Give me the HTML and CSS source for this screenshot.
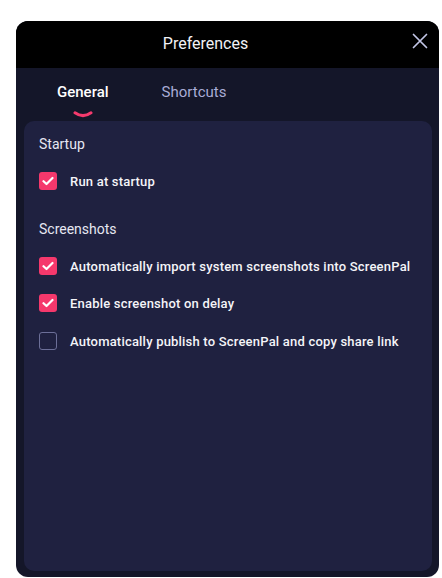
FILE: index.html
```html
<!DOCTYPE html>
<html>
<head>
<meta charset="utf-8">
<link rel="stylesheet" href="styles.css">
</head>
<body>
<div class="window">
  <div class="titlebar">
    <span class="title">Preferences</span>
    <svg class="close" width="16" height="16" viewBox="0 0 16 16"><path d="M1.5 1.5L14.5 14.5M14.5 1.5L1.5 14.5" stroke="#c3c6e6" stroke-width="1.7" stroke-linecap="round"/></svg>
  </div>
  <div class="tabs">
    <div class="tab active">General
      <svg class="chev" width="20" height="7" viewBox="0 0 20 7"><path d="M2 1.8Q10 7.5 18 1.8" fill="none" stroke="#f53a6d" stroke-width="3" stroke-linecap="round"/></svg>
    </div>
    <div class="tab">Shortcuts</div>
  </div>
  <div class="panel">
    <div class="section-title first">Startup</div>
    <div class="row r1"><span class="cb on"><svg width="12" height="10" viewBox="0 0 12 10"><path d="M1.5 5.2L4.5 8L10.5 2" fill="none" stroke="#fff" stroke-width="2.2" stroke-linecap="round" stroke-linejoin="round"/></svg></span><span class="label">Run at startup</span></div>
    <div class="section-title second">Screenshots</div>
    <div class="row r2"><span class="cb on"><svg width="12" height="10" viewBox="0 0 12 10"><path d="M1.5 5.2L4.5 8L10.5 2" fill="none" stroke="#fff" stroke-width="2.2" stroke-linecap="round" stroke-linejoin="round"/></svg></span><span class="label">Automatically import system screenshots into ScreenPal</span></div>
    <div class="row r3"><span class="cb on"><svg width="12" height="10" viewBox="0 0 12 10"><path d="M1.5 5.2L4.5 8L10.5 2" fill="none" stroke="#fff" stroke-width="2.2" stroke-linecap="round" stroke-linejoin="round"/></svg></span><span class="label">Enable screenshot on delay</span></div>
    <div class="row r4"><span class="cb off"></span><span class="label">Automatically publish to ScreenPal and copy share link</span></div>
  </div>
</div>
</body>
</html>
```
FILE: styles.css
```css
html, body {
  margin: 0;
  padding: 0;
  background: #ffffff;
  font-family: Roboto, "Liberation Sans", sans-serif;
}
.window {
  margin: 21px 0 0 16px;
  width: 423px;
  height: 556px;
  background: #141629;
  border-radius: 12px;
  overflow: hidden;
  display: flex;
  flex-direction: column;
}
.titlebar {
  height: 47px;
  background: #000000;
  display: flex;
  align-items: center;
  justify-content: center;
  position: relative;
  flex-shrink: 0;
}
.title {
  color: #f2f2f6;
  font-size: 16px;
  margin-left: -44px;
  margin-top: -2px;
}
.close {
  position: absolute;
  right: 11px;
  top: 12px;
}
.tabs {
  height: 53px;
  display: flex;
  flex-shrink: 0;
  padding-left: 41px;
  gap: 53px;
  box-sizing: border-box;
  padding-top: 15px;
}
.tab {
  font-size: 15px;
  color: #a9acd6;
  line-height: 18px;
  position: relative;
}
.tab.active {
  color: #ffffff;
  font-weight: 500;
}
.chev {
  position: absolute;
  left: 16px;
  top: 28px;
}
.panel {
  flex: 1;
  margin: 0 7px 6px 8px;
  background: #1f2140;
  border-radius: 10px;
  padding: 13px 15px 0 15px;
  display: flex;
  flex-direction: column;
}
.section-title {
  color: #e6e7f2;
  font-size: 14px;
  line-height: 20px;
}
.section-title.second { margin-top: 29px; }
.row {
  display: flex;
  align-items: center;
  height: 18px;
}
.r1 { margin-top: 18px; }
.r2 { margin-top: 18px; }
.r3 { margin-top: 19px; }
.r4 { margin-top: 20px; }
.cb {
  width: 18px;
  height: 18px;
  border-radius: 3px;
  box-sizing: border-box;
  display: flex;
  align-items: center;
  justify-content: center;
  flex-shrink: 0;
}
.cb.on { background: #f5386c; }
.cb.off { border: 1.5px solid #6c6f98; }
.label {
  margin-left: 13px;
  color: #f4f4f8;
  font-size: 13px;
  font-weight: 500;
  letter-spacing: 0.2px;
  white-space: nowrap;
}
```
